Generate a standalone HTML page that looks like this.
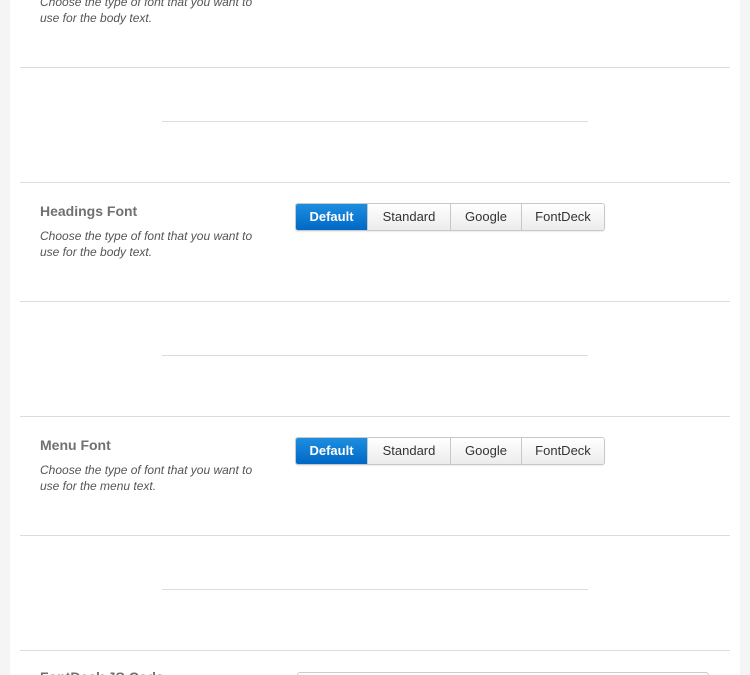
<!DOCTYPE html>
<html style="height:675px;overflow:hidden"><head><style>
body{margin:0;width:750px;height:675px;background:#f5f5f5;position:relative;overflow:hidden;font-family:"Liberation Sans",Arial,sans-serif;}
.panel{position:absolute;left:10px;top:0;width:730px;height:675px;background:#fff;}
.hr{position:absolute;left:20px;width:710px;height:1px;background:#dcdcdc;}
.sh{position:absolute;left:162px;width:426px;height:1px;background:#dcdcdc;}
.t{position:absolute;left:40px;font-size:14px;font-weight:bold;color:#737070;}
.d{position:absolute;left:40px;font-size:12px;font-style:italic;color:#555;line-height:16px;width:230px;}
.bg{position:absolute;left:295px;height:26px;display:flex;border:1px solid #c8c8c8;border-radius:3px;overflow:hidden;box-shadow:0 1px 1px rgba(0,0,0,.08);}
.bg span{display:block;height:26px;line-height:26px;text-align:center;font-size:13px;color:#333;background:linear-gradient(#fff,#ececec);border-left:1px solid #c8c8c8;box-sizing:border-box;}
.bg span.a{background:linear-gradient(#1e8ee0,#0068c6);color:#fff;border-left:none;font-weight:bold;}
</style></head><body>
<div class="panel"></div>
<div class="d" style="top:-6px">Choose the type of font that you want to<br>use for the body text.</div>
<div class="hr" style="top:67px"></div>
<div class="sh" style="top:121px"></div>
<div class="hr" style="top:182px"></div>
<div class="t" style="top:203px">Headings Font</div>
<div class="d" style="top:228px">Choose the type of font that you want to<br>use for the body text.</div>
<div class="bg" style="top:203px"><span class="a" style="width:71px">Default</span><span style="width:83px">Standard</span><span style="width:71px">Google</span><span style="width:83px">FontDeck</span></div>
<div class="hr" style="top:301px"></div>
<div class="sh" style="top:355px"></div>
<div class="hr" style="top:416px"></div>
<div class="t" style="top:437px">Menu Font</div>
<div class="d" style="top:462px">Choose the type of font that you want to<br>use for the menu text.</div>
<div class="bg" style="top:437px"><span class="a" style="width:71px">Default</span><span style="width:83px">Standard</span><span style="width:71px">Google</span><span style="width:83px">FontDeck</span></div>
<div class="hr" style="top:535px"></div>
<div class="sh" style="top:589px"></div>
<div class="hr" style="top:650px"></div>
<div class="t" style="top:669px">FontDeck JS Code</div>
<div style="position:absolute;left:297px;top:672px;width:410px;height:20px;border:1px solid #ccc;border-radius:3px;background:#fff"></div>
</body></html>
